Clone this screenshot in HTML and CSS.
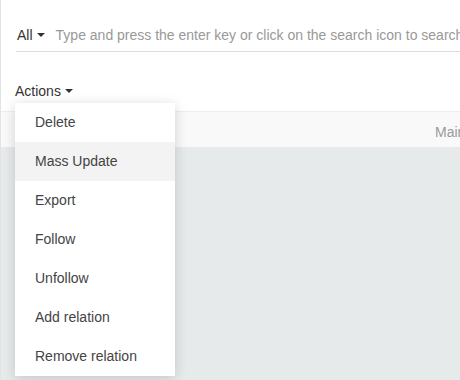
FILE: index.html
```html
<!DOCTYPE html>
<html>
<head>
<meta charset="utf-8">
<link rel="stylesheet" href="styles.css">
</head>
<body>
<div class="page">
  <div class="search">
    <span class="scope">All <span class="caret"></span></span>
    <span class="placeholder">Type and press the enter key or click on the search icon to search</span>
  </div>
  <div class="actions-row">
    <span class="actions">Actions <span class="caret"></span></span>
    <ul class="menu">
      <li>Delete</li>
      <li class="active">Mass Update</li>
      <li>Export</li>
      <li>Follow</li>
      <li>Unfollow</li>
      <li>Add relation</li>
      <li>Remove relation</li>
    </ul>
  </div>
  <div class="table-head"><span class="col">Main</span></div>
  <div class="table-body"></div>
</div>
</body>
</html>
```
FILE: styles.css
```css
html, body {
  margin: 0;
  padding: 0;
  height: 100%;
  background: #fff;
}
body {
  font-family: "Liberation Sans", Arial, sans-serif;
  font-size: 14px;
  color: #333;
  overflow: hidden;
}
.page {
  height: 100%;
  display: flex;
  flex-direction: column;
  border-left: 1px solid #e3e3e3;
  box-sizing: border-box;
}
.search {
  margin: 25px 0 0 15px;
  padding-bottom: 6px;
  line-height: 20px;
  border-bottom: 1px solid #ddd;
  white-space: nowrap;
  overflow: hidden;
  display: flex;
}
.scope {
  padding-left: 1px;
  color: #333;
  display: flex;
  align-items: center;
  gap: 4px;
}
.caret {
  display: inline-block;
  width: 0;
  height: 0;
  border-left: 4px solid transparent;
  border-right: 4px solid transparent;
  border-top: 4px solid #333;
}
.placeholder {
  color: #999;
  margin-left: 11px;
}
.actions-row {
  position: relative;
  margin-top: 29px;
  padding-left: 14px;
  height: 30px;
  line-height: 20px;
}
.actions {
  display: inline-flex;
  align-items: center;
  gap: 4px;
  color: #333;
}
.menu {
  position: absolute;
  top: 22px;
  left: 14px;
  width: 160px;
  margin: 0;
  padding: 0;
  list-style: none;
  background: #fff;
  box-shadow: 0 2px 12px rgba(0, 0, 0, 0.16);
  z-index: 2;
}
.menu li {
  padding: 10px 20px;
  line-height: 19px;
  color: #444;
}
.menu li.active {
  background: #f3f3f3;
}
.table-head {
  height: 35px;
  border-top: 1px solid #eee;
  background: #f9f9f9;
  display: flex;
  align-items: center;
  padding-left: 434px;
  white-space: nowrap;
  overflow: hidden;
  color: #999;
  line-height: 20px;
}
.col {
  padding-top: 4px;
}
.table-body {
  flex: 1;
  background: #e7eaeb;
}
```
